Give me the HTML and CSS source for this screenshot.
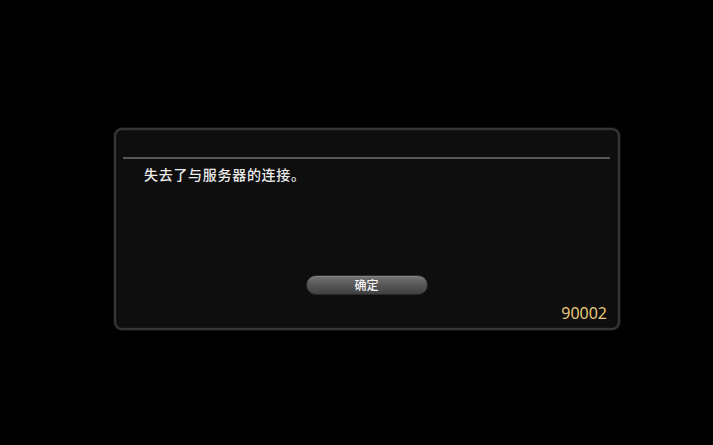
FILE: index.html
```html
<!DOCTYPE html>
<html lang="zh-CN">
<head>
<meta charset="utf-8">
<title>Error</title>
<link rel="stylesheet" href="styles.css">
</head>
<body>
<div class="dialog">
  <div class="header"></div>
  <div class="rule"></div>
  <p class="message">失去了与服务器的连接。</p>
  <div class="actions">
    <button class="btn" type="button">确定</button>
  </div>
  <div class="footer"><span class="code">90002</span></div>
</div>
</body>
</html>
```
FILE: styles.css
```css
html, body {
  margin: 0;
  padding: 0;
  background: #000;
  width: 713px;
  height: 445px;
  overflow: hidden;
}
body {
  font-family: "Noto Sans CJK SC", "Noto Sans", sans-serif;
  padding-top: 128px;
  padding-left: 114px;
  box-sizing: border-box;
}
.dialog {
  width: 506px;
  height: 202px;
  box-sizing: border-box;
  border: 2px solid #363636;
  border-radius: 8px;
  background: #0e0e0e;
  box-shadow: 0 0 0 1px #101010, inset 0 0 0 1px #151515;
  display: flex;
  flex-direction: column;
  padding: 0 8px 0 7px;
}
.header {
  height: 27px;
  flex: none;
}
.rule {
  height: 2px;
  background: #585858;
  flex: none;
}
.message {
  margin: 5px 0 0 21px;
  font-size: 14px;
  font-weight: 500;
  line-height: 20px;
  color: #ececec;
  letter-spacing: 0.7px;
}
.actions {
  display: flex;
  justify-content: center;
  margin-top: 91px;
}
.btn {
  width: 122px;
  height: 20px;
  border-radius: 10px;
  border: 1px solid #2a2a2a;
  background: linear-gradient(#747474 0%, #5a5a5a 45%, #404040 100%);
  box-shadow: inset 0 1px 0 rgba(255,255,255,0.12);
  color: #f4f4f4;
  font-family: "Noto Sans CJK SC", sans-serif;
  font-size: 12px;
  font-weight: 500;
  line-height: 18px;
  padding: 0;
  margin-left: 0;
}
.footer {
  display: flex;
  justify-content: flex-end;
  margin-top: 8px;
}
.code {
  font-family: "Noto Sans", sans-serif;
  font-size: 16px;
  line-height: 20px;
  color: #e6c87c;
  margin-right: 3px;
}
```
